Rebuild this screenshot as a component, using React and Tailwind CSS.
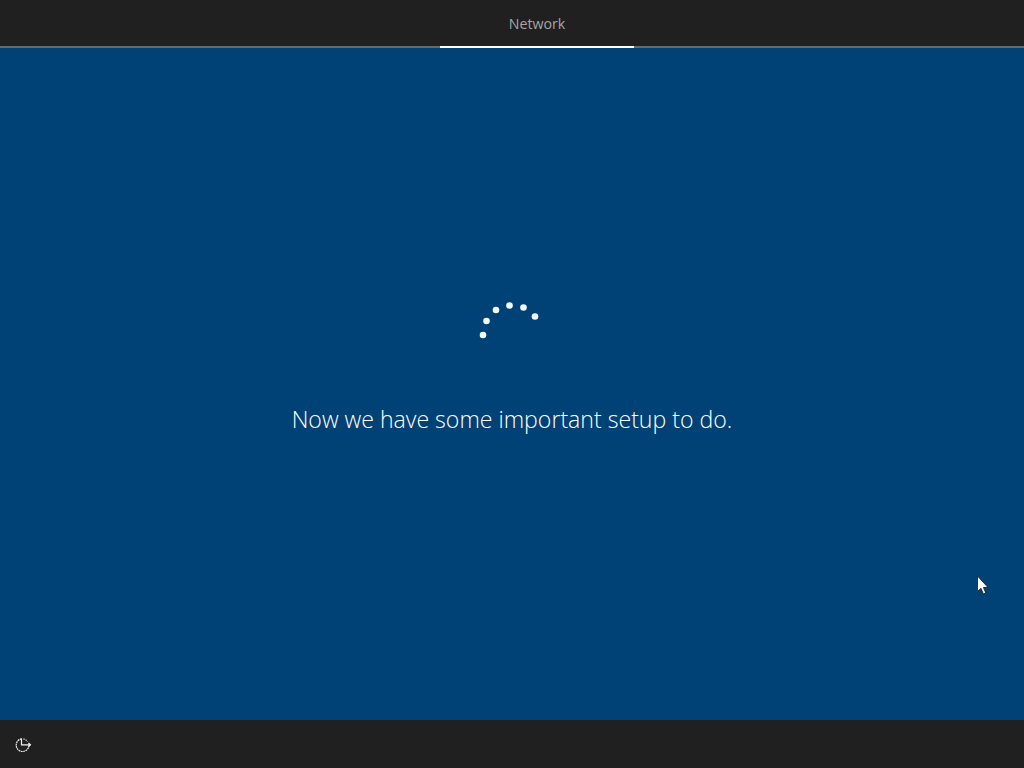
import React from 'react';

const dots = [
  [13, 35],
  [16.5, 21],
  [26, 10],
  [39.5, 5.5],
  [53.5, 7.5],
  [65, 16.5],
];

const Spinner = () => (
  <svg width="80" height="40" viewBox="0 0 80 40" className="block">
    {dots.map(([cx, cy]) => (
      <circle key={cx} cx={cx} cy={cy} r="3.3" fill="#f4f8fb" />
    ))}
  </svg>
);

const EaseOfAccess = () => (
  <svg width="18" height="18" viewBox="0 0 18 18" fill="none" stroke="#f2f2f2" strokeWidth="1.2" className="block">
    <path d="M7.5 2.8 A6.4 6.4 0 1 0 15 9.4" strokeDasharray="1.8 0.6" />
    <path d="M7.5 2.6 V8.8 H16.4" />
    <path d="M9.5 2.9 A6.4 6.4 0 0 1 13.5 5.6" strokeDasharray="1.2 1" />
    <path d="M14.4 7 L16.4 8.8 L14.4 10.6" />
  </svg>
);

const Cursor = () => (
  <svg width="14" height="22" viewBox="0 0 14 22" className="absolute left-[976px] top-[575px]">
    <path d="M1.5 1 V16.5 L5 13.3 L7.4 19 L9.8 18 L7.4 12.5 H12 Z" fill="#ffffff" stroke="#0b1a2a" strokeWidth="0.8" />
  </svg>
);

export default function App() {
  return (
    <div className="relative flex h-screen w-full flex-col overflow-hidden bg-[#004275] font-['Open_Sans',sans-serif]">
      <div className="h-[48px] bg-[#202020] pl-[440px] border-b-2 border-[#6a6a6a]">
        <div className="relative flex h-[48px] w-[194px] items-center justify-center border-b-2 border-white pt-[2px] text-[14.2px] text-[#a6a6a6]">
          Network
        </div>
      </div>

      <div className="flex flex-1 flex-col items-center pt-[252px]">
        <div className="pr-[4px]">
          <Spinner />
        </div>
        <p className="mt-[63px] text-[23.1px] font-light leading-[32px] text-white">Now we have some important setup to do.</p>
      </div>

      <div className="flex h-[48px] items-center bg-[#202020] pl-[14px]">
        <div className="pt-[2px]">
          <EaseOfAccess />
        </div>
      </div>

      <Cursor />
    </div>
  );
}
